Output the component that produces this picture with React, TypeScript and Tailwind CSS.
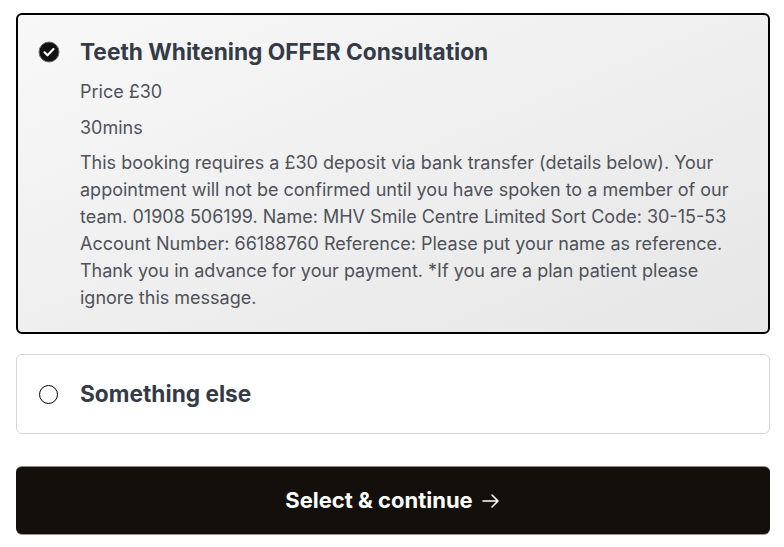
const lines = [
  "This booking requires a £30 deposit via bank transfer (details below). Your",
  "appointment will not be confirmed until you have spoken to a member of our",
  "team. 01908 506199. Name: MHV Smile Centre Limited Sort Code: 30-15-53",
  "Account Number: 66188760 Reference: Please put your name as reference.",
  "Thank you in advance for your payment. *If you are a plan patient please",
  "ignore this message.",
];

function CheckDot() {
  return (
    <svg width="22" height="22" viewBox="0 0 22 22" className="shrink-0">
      <circle cx="11" cy="11" r="10" fill="#111" stroke="#6b6b6b" strokeWidth="1" />
      <path d="M6.5 11.3l3 3 6-6.2" fill="none" stroke="#fff" strokeWidth="2.2" strokeLinecap="round" strokeLinejoin="round" />
    </svg>
  );
}

export default function App() {
  return (
    <div className="min-h-screen bg-white pl-4 pr-[14px] pt-[13px]" style={{ fontFamily: "Inter, 'Liberation Sans', sans-serif" }}>
      <div className="flex flex-col">
        <div className="rounded-md border-2 border-black bg-gradient-to-br from-[#f8f8f8] to-[#e6e6e6] pl-5 pr-4 pt-[21px] pb-[21px]">
          <div className="flex items-start gap-5">
            <div className="pt-[5px]">
              <CheckDot />
            </div>
            <div className="flex flex-col">
              <h2 className="text-[22.7px] font-bold leading-[32px] text-[#343b46]">Teeth Whitening OFFER Consultation</h2>
              <p className="mt-[10px] text-[18px] leading-[27px] text-[#4e525a]">Price £30</p>
              <p className="mt-[9px] text-[18px] leading-[27px] text-[#4e525a]">30mins</p>
              <div className="mt-[8px] text-[18px] leading-[27px] text-[#4e525a]">
                {lines.map(l => (
                  <span key={l} className="block whitespace-nowrap">{l}</span>
                ))}
              </div>
            </div>
          </div>
        </div>

        <div className="mt-5 flex h-20 items-center gap-[22px] rounded-md border border-[#d6d6d6] bg-white pl-[22px]">
          <span className="h-[19px] w-[19px] shrink-0 rounded-full border-[1.5px] border-black bg-white" />
          <span className="text-[22.7px] font-bold text-[#343b46]">Something else</span>
        </div>

        <button className="mt-8 flex h-[68px] items-center justify-center gap-2 rounded-md border-t border-[#8a8781] bg-[#13100b] text-[22px] font-bold text-white shadow-[0_1px_0_#9a9792]">
          <span>Select &amp; continue</span>
          <svg width="20" height="20" viewBox="0 0 20 20" fill="none" stroke="#fff" strokeWidth="1.6" strokeLinecap="round" strokeLinejoin="round">
            <path d="M2 10h15M11 4l6 6-6 6" />
          </svg>
        </button>
      </div>
    </div>
  );
}
